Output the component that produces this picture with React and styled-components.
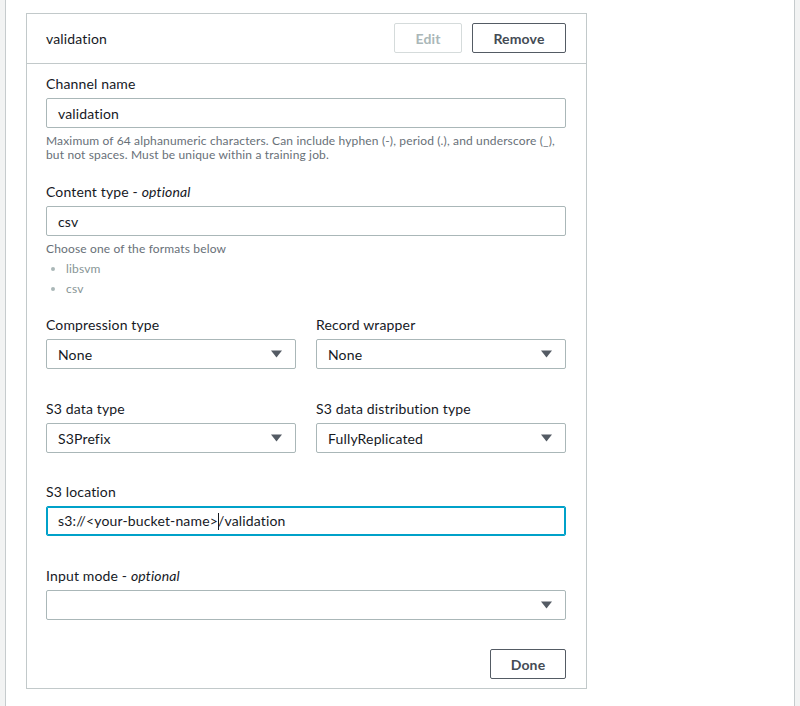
import React from "react";
import styled, { createGlobalStyle } from "styled-components";

const GlobalStyle = createGlobalStyle`
  html, body {
    margin: 0;
    padding: 0;
    background: #f2f3f3;
  }
  body {
    font-family: "Lato", "Open Sans", "Noto Sans", sans-serif;
    color: #16191f;
    letter-spacing: 0.15px;
  }
`;

const Page = styled.div`
  margin: 0 5px;
  min-height: 706px;
  box-sizing: border-box;
  background: #ffffff;
  border-left: 1px solid #c6cbcd;
  border-right: 1px solid #c6cbcd;
  padding: 13px 20px 0;
`;

const Card = styled.div`
  width: 561px;
  box-sizing: border-box;
  border: 1px solid #c2c9ca;
  background: #fff;
`;

const Header = styled.div`
  height: 50px;
  box-sizing: border-box;
  display: flex;
  align-items: center;
  justify-content: space-between;
  padding: 0 20px 1px 19px;
  border-bottom: 1px solid #c2c9ca;
`;

const HeaderTitle = styled.div`
  font-size: 14px;
  color: #16191f;
`;

const ButtonRow = styled.div`
  display: flex;
  gap: 10px;
`;

const Button = styled.button`
  height: 30px;
  min-width: ${({ $width }) => $width || 76}px;
  box-sizing: border-box;
  padding: 0 16px;
  background: #fff;
  border: 1px solid ${({ $disabled }) => ($disabled ? "#d5dbdb" : "#545b64")};
  border-radius: 2px;
  font-family: inherit;
  letter-spacing: inherit;
  font-size: 14px;
  font-weight: 700;
  color: ${({ $disabled }) => ($disabled ? "#aab7b8" : "#444b54")};
  cursor: ${({ $disabled }) => ($disabled ? "default" : "pointer")};
`;

const Body = styled.div`
  padding: 10px 20px 0 19px;
  display: flex;
  flex-direction: column;
`;

const Field = styled.div`
  display: flex;
  flex-direction: column;
  margin-bottom: ${({ $space }) => $space ?? 30}px;
  min-width: 0;
`;

const Row = styled.div`
  display: grid;
  grid-template-columns: 1fr 1fr;
  column-gap: 20px;
  margin-bottom: ${({ $space }) => $space ?? 30}px;
`;

const Label = styled.div`
  font-size: 14px;
  line-height: 20px;
  color: #16191f;
  margin-bottom: 4px;

  em {
    font-style: italic;
  }
`;

const Control = styled.div`
  height: 30px;
  box-sizing: border-box;
  display: flex;
  align-items: center;
  justify-content: space-between;
  padding: 0 13px 0 11px;
  border: 1px solid ${({ $focused }) => ($focused ? "#00a1c9" : "#aab7b8")};
  box-shadow: ${({ $focused }) => ($focused ? "inset 0 0 0 1px #00a1c9" : "none")};
  border-radius: 2px;
  background: #fff;
  font-size: 14px;
  color: #16191f;
`;

const Caret = styled.span`
  display: inline-block;
  width: 1px;
  height: 17px;
  background: #16191f;
  vertical-align: middle;
  margin: 0 -1px 0 0;
`;

const Help = styled.div`
  margin-top: 6px;
  font-size: 12px;
  line-height: 14px;
  color: #687078;
`;

const Options = styled.ul`
  margin: 3px 0 0;
  padding: 0 0 0 20px;
  font-size: 12px;
  line-height: 20px;
  color: #879596;

  li::marker {
    color: #aab7b8;
  }
`;

const Footer = styled.div`
  display: flex;
  justify-content: flex-end;
  padding: 29px 20px 9px;
`;

function Arrow() {
  return (
    <svg width="11" height="8" viewBox="0 0 11 8">
      <path d="M0 0.5h11L5.5 7.5z" fill="#545b64" />
    </svg>
  );
}

function Select({ value }) {
  return (
    <Control>
      <span>{value}</span>
      <Arrow />
    </Control>
  );
}

export default function App() {
  return (
    <>
      <GlobalStyle />
      <Page>
        <Card>
          <Header>
            <HeaderTitle>validation</HeaderTitle>
            <ButtonRow>
              <Button $disabled $width={68}>Edit</Button>
              <Button $width={94}>Remove</Button>
            </ButtonRow>
          </Header>

          <Body>
            <Field $space={20}>
              <Label>Channel name</Label>
              <Control>validation</Control>
              <Help>
                Maximum of 64 alphanumeric characters. Can include hyphen (-), period (.), and underscore (_),
                <br />
                but not spaces. Must be unique within a training job.
              </Help>
            </Field>

            <Field $space={16}>
              <Label>
                Content type - <em>optional</em>
              </Label>
              <Control>csv</Control>
              <Help>Choose one of the formats below</Help>
              <Options>
                <li>libsvm</li>
                <li>csv</li>
              </Options>
            </Field>

            <Row>
              <Field $space={0}>
                <Label>Compression type</Label>
                <Select value="None" />
              </Field>
              <Field $space={0}>
                <Label>Record wrapper</Label>
                <Select value="None" />
              </Field>
            </Row>

            <Row $space={29}>
              <Field $space={0}>
                <Label>S3 data type</Label>
                <Select value="S3Prefix" />
              </Field>
              <Field $space={0}>
                <Label>S3 data distribution type</Label>
                <Select value="FullyReplicated" />
              </Field>
            </Row>

            <Field>
              <Label>S3 location</Label>
              <Control $focused>
                <span>
                  s3://&lt;your-bucket-name&gt;
                  <Caret />
                  /validation
                </span>
              </Control>
            </Field>

            <Field $space={0}>
              <Label>
                Input mode - <em>optional</em>
              </Label>
              <Select value="" />
            </Field>
          </Body>

          <Footer>
            <Button $width={76}>Done</Button>
          </Footer>
        </Card>
      </Page>
    </>
  );
}
